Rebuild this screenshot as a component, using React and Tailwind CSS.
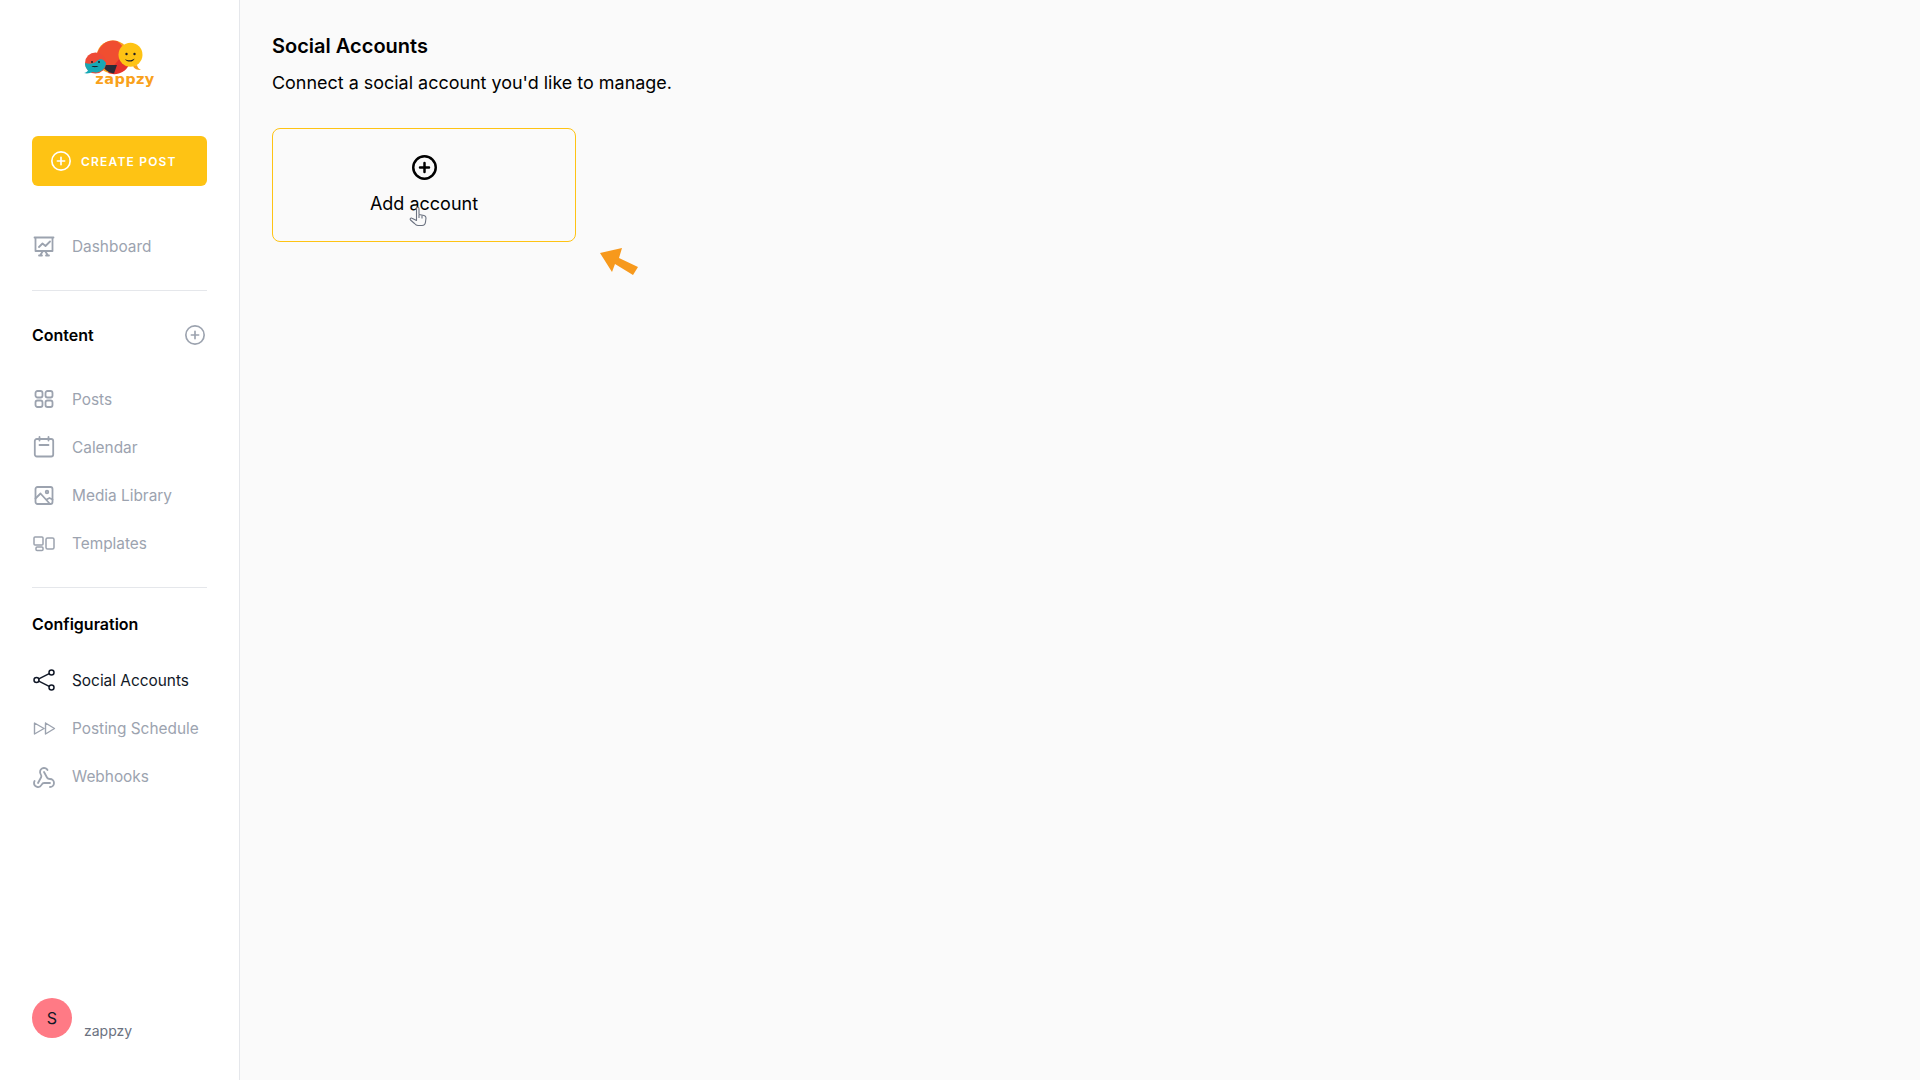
import React from 'react';
import { Webhook } from 'lucide-react';

const Icon = ({ children, className = '', strokeWidth = 1.8 }) => (
  <svg
    viewBox="0 0 24 24"
    fill="none"
    stroke="currentColor"
    strokeWidth={strokeWidth}
    strokeLinecap="round"
    strokeLinejoin="round"
    className={`w-6 h-6 shrink-0 ${className}`}
  >
    {children}
  </svg>
);

const PlusCircle = ({ className, strokeWidth = 1.8 }) => (
  <svg viewBox="0 0 24 24" fill="none" stroke="currentColor" strokeWidth={strokeWidth} strokeLinecap="round" className={className}>
    <circle cx="12" cy="12" r="10" />
    <path d="M12 8v8M8 12h8" />
  </svg>
);

const DashboardIcon = () => (
  <Icon>
    <path d="M2.500 3.500h19M3.500 3.500v13.500h17V3.500M7 13l3.500-3.500 3 2.500L18 7.500M8 21.500l3-4.500M16 21.500l-3-4.500M7 21.500h3M14 21.500h3" />
  </Icon>
);
const PostsIcon = () => (
  <Icon>
    <rect x="3.500" y="4" width="7" height="6.500" rx="2" />
    <rect x="13.500" y="4" width="7" height="6.500" rx="2" />
    <rect x="3.500" y="13.500" width="7" height="6.500" rx="2" />
    <rect x="13.500" y="13.500" width="7" height="6.500" rx="2" />
  </Icon>
);
const CalendarIcon = () => (
  <Icon>
    <rect x="2.800" y="4" width="18.400" height="17.500" rx="2" />
    <path d="M7.500 2v3.500M16.500 2v3.500M7.500 10h9" />
  </Icon>
);
const MediaIcon = () => (
  <Icon>
    <rect x="3.500" y="4" width="17" height="17" rx="2" />
    <circle cx="15" cy="9" r="1.300" />
    <path d="M3.500 15.500l5-5 9.500 10.500M14.500 16.500l3-1.500 3 1.500" />
  </Icon>
);
const TemplatesIcon = () => (
  <Icon strokeWidth={1.5}>
    <rect x="2" y="6" width="9" height="8" rx="1" />
    <rect x="4" y="16" width="7" height="3.500" rx="1" />
    <rect x="14" y="7" width="8" height="11" rx="1.500" />
  </Icon>
);
const ShareIcon = () => (
  <Icon strokeWidth={1.5}>
    <circle cx="19.500" cy="4.500" r="2.500" />
    <circle cx="4.500" cy="12" r="2.500" />
    <circle cx="19.500" cy="19.500" r="2.500" />
    <path d="M6.800 10.800 17.200 5.700M6.800 13.200l10.400 5.100" />
  </Icon>
);
const ScheduleIcon = () => (
  <Icon strokeWidth={1.4}>
    <path d="M2.500 7v11l9.500-5.500zM13.500 7l9 5.500-9 5.500M13.500 7v11" />
  </Icon>
);

const Logo = () => (
  <svg viewBox="0 0 72 50" className="w-[72px] h-[50px]">
    <circle cx="29" cy="19" r="16.500" fill="#f9a11b" />
    <path d="M15 27 A16.500 16.500 0 0 1 33 3 C40 8 44 16 36 25 C30 31 21 32 15 27Z" fill="#f04e30" />
    <path d="M24 35 C32 38 41 35 45 27 L36 20 Z" fill="#e5322d" />
    <path d="M18 27 C21 33 26 35 30 35.500 L33 27 Z" fill="#2b2b38" />
    <circle cx="11.500" cy="25" r="10.500" fill="#ee4a37" />
    <path d="M1 25 a10.500 10.500 0 0 0 3 7.500 c-1 1.600-2.600 2.400-4 2.600 c3 .6 6.500 .2 8.500-1 a10.500 10.500 0 0 0 13.500-9 c-2-4-6-5.500-9-2 c-3 3-8.500 3-12 1.900Z" fill="#16a8b5" />
    <circle cx="8" cy="24" r="1" fill="#1d1d26" />
    <circle cx="15" cy="24" r="1" fill="#1d1d26" />
    <path d="M7.500 28c1.500 1.600 5 1.600 7 0Z" fill="#1d1d26" />
    <circle cx="46.500" cy="16.700" r="12" fill="#fec314" />
    <path d="M49 28.500c1.500 2.500 4 3.500 8 3.500-2.500-1-3.500-3-4-5Z" fill="#f9a11b" />
    <circle cx="42.500" cy="16" r="1.200" fill="#1d1d26" />
    <circle cx="50.500" cy="16" r="1.200" fill="#1d1d26" />
    <path d="M41 21c2 1.600 7 2 9.500-.5-.3 3.500-7.500 4.500-9.500 .5Z" fill="#1d1d26" />
    <text x="41" y="45.500" textAnchor="middle" fontFamily="'DejaVu Sans', sans-serif" fontWeight="700" fontSize="14.500" fill="#f9a11b" letterSpacing="0.4">zappzy</text>
  </svg>
);

const NavItem = ({ icon, label, active }) => (
  <div className={`h-12 flex items-center gap-4 text-[15.4px] ${active ? 'text-[#111827]' : 'text-[#9ca3af]'}`}>
    {icon}
    <span className="pt-px">{label}</span>
  </div>
);

const App = () => {
  return (
    <div className="flex h-screen bg-[#fafafa] text-black font-['Inter',sans-serif]">
      <aside className="w-[240px] shrink-0 h-full bg-white border-r border-[#e5e7eb] px-8 flex flex-col">
        <div className="mt-[38px] h-[50px] flex justify-center">
          <Logo />
        </div>
        <button className="mt-12 h-[50px] w-full rounded-md bg-[#fec314] text-white flex items-center gap-[9px] pl-[18px]">
          <PlusCircle className="w-[22px] h-[22px]" />
          <span className="text-xs font-semibold tracking-[0.1em] pt-px">CREATE POST</span>
        </button>
        <div className="mt-9">
          <NavItem icon={<DashboardIcon />} label="Dashboard" />
        </div>
        <div className="mt-5 h-px bg-[#e5e7eb]" />
        <div className="mt-8 h-6 flex items-center justify-between">
          <span className="text-base font-semibold">Content</span>
          <PlusCircle className="w-[22px] h-[22px] text-[#9ca3af] mr-px" />
        </div>
        <div className="mt-7">
          <NavItem icon={<PostsIcon />} label="Posts" />
          <NavItem icon={<CalendarIcon />} label="Calendar" />
          <NavItem icon={<MediaIcon />} label="Media Library" />
          <NavItem icon={<TemplatesIcon />} label="Templates" />
        </div>
        <div className="mt-5 h-px bg-[#e5e7eb]" />
        <div className="mt-6 h-6 flex items-center">
          <span className="text-base font-semibold">Configuration</span>
        </div>
        <div className="mt-5">
          <NavItem icon={<ShareIcon />} label="Social Accounts" active />
          <NavItem icon={<ScheduleIcon />} label="Posting Schedule" />
          <NavItem icon={<Webhook className="w-6 h-6 shrink-0 mt-1" strokeWidth={1.8} />} label="Webhooks" />
        </div>
        <div className="mt-auto mb-[42px] flex items-end gap-3">
          <div className="w-10 h-10 rounded-full bg-[#ff7a85] text-[#111827] flex items-center justify-center text-base">S</div>
          <span className="text-sm text-[#6b7280] mb-[-3px]">zappzy</span>
        </div>
      </aside>

      <main className="flex-1 px-8 pt-[32px]">
        <h1 className="text-xl leading-7 font-semibold">Social Accounts</h1>
        <p className="mt-[9px] text-[17.95px] leading-7">Connect a social account you'd like to manage.</p>
        <div className="relative mt-[31px] w-[304px] h-[114px]">
          <button className="w-full h-full rounded-lg border border-[#fec314] flex flex-col items-center pt-[24px]">
            <PlusCircle className="w-[27px] h-[27px] mt-px" strokeWidth={2.2} />
            <span className="mt-[9px] text-lg leading-7">Add account</span>
          </button>
          {/* hand cursor sitting on the card */}
          <svg viewBox="0 0 20 22" className="absolute left-[137px] top-[78px] w-[20px] h-[22px]" fill="#fafafa" stroke="#6b7280" strokeWidth="1.100" strokeLinejoin="round">
            <path d="M7.500 2.500c0-1.600 2.500-1.600 2.500 0v6l5 1c1.500.4 2 1.200 2 2.500l-.5 4c-.2 2-1.500 3.500-3.500 3.500h-4c-1.500 0-2.500-.8-3.500-2l-4-3.500c-1-1.200.3-2.500 1.500-1.800l4.500 2.300Z" />
            <path d="M10 9v3M13 9.500v3" />
          </svg>
          {/* orange arrow annotation */}
          <svg viewBox="0 0 40 30" className="absolute left-[327px] top-[118px] w-[40px] h-[30px]" fill="#f7991c">
            <path d="M1 7 23 2 20 12 39 21 34 29 16 18 13 26Z" />
          </svg>
        </div>
      </main>
    </div>
  );
};

export default App;
